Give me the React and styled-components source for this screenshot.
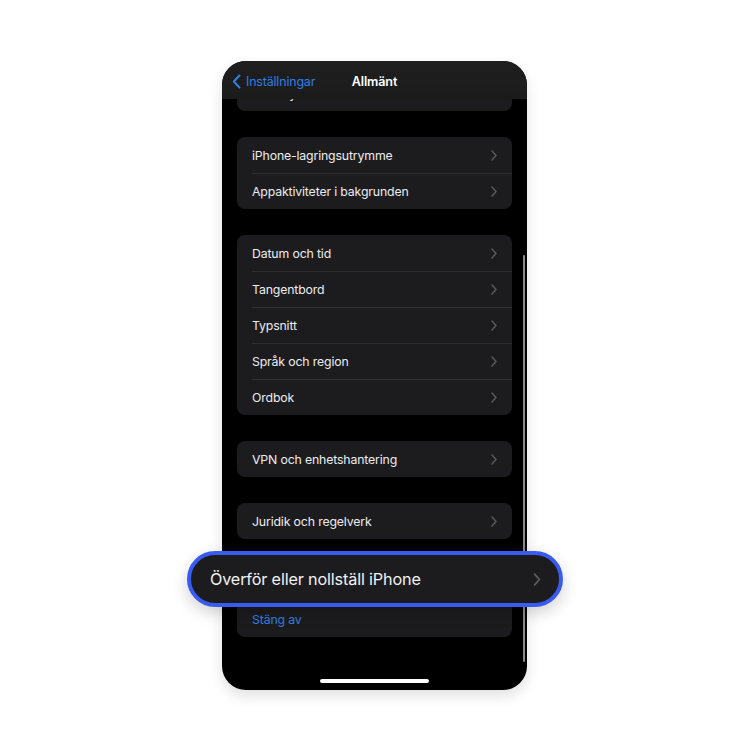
import React from "react";
import styled, { createGlobalStyle } from "styled-components";

const Global = createGlobalStyle`
  html, body { margin: 0; padding: 0; background: #ffffff; }
  body { font-family: Inter, "Noto Sans", "Liberation Sans", sans-serif; -webkit-font-smoothing: antialiased; }
`;

const Page = styled.div`
  width: 750px;
  height: 750px;
  display: flex;
  justify-content: center;
  padding-top: 61px;
  box-sizing: border-box;
`;

const Stage = styled.div`
  position: relative;
  width: 305px;
  height: 629px;
  margin-left: -1px;
`;

const Phone = styled.div`
  position: relative;
  width: 100%;
  height: 100%;
  background: #000;
  border-radius: 24px;
  overflow: hidden;
  box-shadow: 0 6px 14px rgba(0, 0, 0, 0.12);
`;

const NavBar = styled.div`
  position: absolute;
  top: 0;
  left: 0;
  right: 0;
  height: 38px;
  padding-top: 2px;
  box-sizing: border-box;
  background: linear-gradient(#1f1f20, #1b1b1c);
  z-index: 2;
  display: flex;
  align-items: center;
  justify-content: center;
`;

const Back = styled.div`
  position: absolute;
  left: 10px;
  top: 2px;
  bottom: 0;
  display: flex;
  align-items: center;
  gap: 5px;
  color: #2f7fe6;
  font-size: 12.4px;
  letter-spacing: -0.15px;
`;

const Title = styled.div`
  color: #fff;
  font-size: 12.6px;
  font-weight: 600;
  letter-spacing: -0.15px;
`;

const Content = styled.div`
  display: flex;
  flex-direction: column;
  gap: 26px;
  padding: 14px 15px 0;
`;

const Card = styled.div`
  background: #1c1c1e;
  border-radius: 8px;
  overflow: hidden;
`;

const Row = styled.div`
  height: 36px;
  display: flex;
  align-items: center;
  justify-content: space-between;
  margin-left: 15px;
  padding-right: 15px;
  box-sizing: border-box;
  border-top: ${(p) => (p.$first ? "none" : "1px solid #2e2e30")};
  color: ${(p) => (p.$accent ? "#2f7fe6" : "#ececee")};
  font-size: 12.3px;
  letter-spacing: -0.15px;
`;

const ScrollBar = styled.div`
  position: absolute;
  left: 301px;
  top: 194px;
  width: 2px;
  height: 407px;
  border-radius: 1px;
  background: #8a8a8e;
  z-index: 3;
`;

const HomeBar = styled.div`
  position: absolute;
  left: 98px;
  bottom: 7px;
  width: 109px;
  height: 4px;
  border-radius: 2px;
  background: #fff;
`;

const Highlight = styled.div`
  position: absolute;
  left: -35px;
  top: 490px;
  width: 376px;
  height: 56px;
  box-sizing: border-box;
  border: 4px solid #3a5bf0;
  border-radius: 28px;
  background: #1c1c1e;
  display: flex;
  align-items: center;
  justify-content: space-between;
  padding: 0 18px 0 19px;
  color: #f2f2f4;
  font-size: 16.2px;
  letter-spacing: -0.15px;
  box-shadow: 0 6px 16px rgba(0, 0, 0, 0.18);
  z-index: 5;
`;

const Chevron = ({ w = 6, h = 11, color = "#58585c" }) => (
  <svg width={w} height={h} viewBox="0 0 6 11" fill="none">
    <polyline points="1,1 5,5.5 1,10" stroke={color} strokeWidth="1.5" strokeLinecap="round" strokeLinejoin="round" />
  </svg>
);

const BackChevron = () => (
  <svg width="9" height="15" viewBox="0 0 9 15" fill="none">
    <polyline points="7.5,1.5 1.8,7.5 7.5,13.5" stroke="#2f7fe6" strokeWidth="2" strokeLinecap="round" strokeLinejoin="round" />
  </svg>
);

const groups = [
  ["CarPlay"],
  ["iPhone-lagringsutrymme", "Appaktiviteter i bakgrunden"],
  ["Datum och tid", "Tangentbord", "Typsnitt", "Språk och region", "Ordbok"],
  ["VPN och enhetshantering"],
  ["Juridik och regelverk"],
];

export default function App() {
  return (
    <>
      <Global />
      <Page>
        <Stage>
          <Phone>
            <NavBar>
              <Back>
                <BackChevron />
                Inställningar
              </Back>
              <Title>Allmänt</Title>
            </NavBar>
            <Content>
              {groups.map((g, gi) => (
                <Card key={gi}>
                  {g.map((label, i) => (
                    <Row key={label} $first={i === 0}>
                      {label}
                      <Chevron />
                    </Row>
                  ))}
                </Card>
              ))}
              <Card>
                <Row $first>
                  Överför eller nollställ iPhone
                  <Chevron />
                </Row>
                <Row $accent>Stäng av</Row>
              </Card>
            </Content>
            <ScrollBar />
            <HomeBar />
          </Phone>
          <Highlight>
            Överför eller nollställ iPhone
            <Chevron w={8} h={13} color="#5c5c60" />
          </Highlight>
        </Stage>
      </Page>
    </>
  );
}
